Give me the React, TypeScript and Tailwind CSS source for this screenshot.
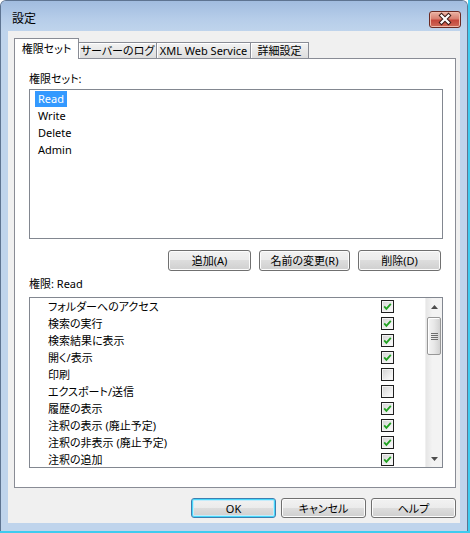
import React from 'react';

const permissionRows: { label: string; checked: boolean }[] = [
  { label: 'フォルダーへのアクセス', checked: true },
  { label: '検索の実行', checked: true },
  { label: '検索結果に表示', checked: true },
  { label: '開く/表示', checked: true },
  { label: '印刷', checked: false },
  { label: 'エクスポート/送信', checked: false },
  { label: '履歴の表示', checked: true },
  { label: '注釈の表示 (廃止予定)', checked: true },
  { label: '注釈の非表示 (廃止予定)', checked: true },
  { label: '注釈の追加', checked: true },
];

const permissionSets = ['Read', 'Write', 'Delete', 'Admin'];

const CheckBox: React.FC<{ checked: boolean }> = ({ checked }) => (
  <svg width="13" height="13" viewBox="0 0 13 13">
    <defs>
      <linearGradient id="cbFill" x1="0" y1="0" x2="1" y2="1">
        <stop offset="0" stopColor="#d6d6d6" />
        <stop offset="1" stopColor="#fbfbfb" />
      </linearGradient>
    </defs>
    <rect x="0.5" y="0.5" width="12" height="12" fill="#f4f4f4" stroke="#1f1f1f" />
    <rect x="2" y="2" width="9" height="9" fill="url(#cbFill)" />
    {checked && (
      <path d="M3.2 6.4 L5.4 8.8 L9.8 3.8" fill="none" stroke="#21a121" strokeWidth="1.8" />
    )}
  </svg>
);

const WinButton: React.FC<{ label: string; width: string; isDefault?: boolean }> = ({
  label,
  width,
  isDefault,
}) => (
  <button
    className={
      isDefault
        ? `${width} h-full rounded-[3px] border border-[#3c7fb1] bg-[linear-gradient(to_bottom,#f2f2f2_0%,#ebebeb_50%,#dddddd_50%,#cfcfcf_100%)] shadow-[inset_0_0_0_1px_#48d8fb,inset_0_0_0_2px_#c4ecfb] leading-none text-black`
        : `${width} h-full rounded-[3px] border border-[#707070] bg-[linear-gradient(to_bottom,#f2f2f2_0%,#ebebeb_50%,#dddddd_50%,#cfcfcf_100%)] shadow-[inset_0_0_0_1px_#fcfcfc] leading-none text-black`
    }
  >
    {label}
  </button>
);

const Tab: React.FC<{ label: string; width: string; active?: boolean }> = ({ label, width, active }) =>
  active ? (
    <div
      className={`${width} h-[21px] relative z-10 flex items-start justify-center pt-[2px] border border-b-0 border-[#898c95] bg-white whitespace-nowrap`}
    >
      {label}
    </div>
  ) : (
    <div
      className={`${width} h-[17px] -ml-px flex items-center justify-center border border-b-0 border-[#898c95] bg-[linear-gradient(to_bottom,#f3f3f3,#e6e6e6_55%,#dcdcdc)] shadow-[inset_1px_1px_0_#ffffff] whitespace-nowrap`}
    >
      {label}
    </div>
  );

const ScrollBar: React.FC = () => (
  <div className="w-[17px] h-full flex flex-col bg-[linear-gradient(to_right,#e6e6e6,#f3f3f3_40%,#f3f3f3)] border-l border-[#f0f0f0]">
    <div className="h-[17px] flex items-center justify-center">
      <svg width="7" height="4" viewBox="0 0 7 4">
        <path d="M3.5 0 L7 4 L0 4 Z" fill="#4d4d4d" />
      </svg>
    </div>
    <div className="mt-[2px] mx-[1px] h-[38px] rounded-[2px] border border-[#979797] bg-[linear-gradient(to_right,#f4f4f4,#e8e8e8_50%,#d2d2d2)] shadow-[inset_1px_1px_0_#ffffff] flex flex-col items-center justify-center gap-[1px]">
      <div className="w-[7px] h-px bg-[#6e6e6e]" />
      <div className="w-[7px] h-px bg-[#6e6e6e]" />
      <div className="w-[7px] h-px bg-[#6e6e6e]" />
      <div className="w-[7px] h-px bg-[#6e6e6e]" />
    </div>
    <div className="flex-1" />
    <div className="h-[17px] flex items-center justify-center">
      <svg width="7" height="4" viewBox="0 0 7 4">
        <path d="M0 0 L7 0 L3.5 4 Z" fill="#4d4d4d" />
      </svg>
    </div>
  </div>
);

export default function App() {
  return (
    <div className="w-[470px] h-[533px] bg-white border-r-[2px] border-b-[2px] border-[#3fcbef] [font-family:'Noto_Sans','Noto_Sans_CJK_JP',sans-serif] [font-feature-settings:'palt'] text-[11px] leading-[16px] text-black">
      <div className="w-full h-full flex flex-col rounded-t-[6px] border border-b-0 border-[#5e7491] bg-[#bfd4ec] overflow-hidden">
        {/* title bar */}
        <div className="h-[30px] flex items-start justify-between bg-[linear-gradient(to_bottom,#a1bcdf,#b6cde9_60%,#bfd4ec)]">
          <div className="pl-[11px] pt-[10px] text-[12px]">設定</div>
          <div className="mt-[10px] mr-[6px] w-[32px] h-[17px] rounded-[3px] border border-[#6b2a22] bg-[linear-gradient(to_bottom,#eab3a5,#d98070_45%,#c4463a_55%,#cf6a58)] shadow-[inset_0_0_0_1px_#f0b8a8] flex items-center justify-center">
            <svg width="30" height="15" viewBox="0 0 30 15">
              <path d="M11.5 3.5 L18.5 10.5 M18.5 3.5 L11.5 10.5" stroke="#3b1a16" strokeWidth="4.2" strokeLinecap="square" />
              <path d="M11.5 3.5 L18.5 10.5 M18.5 3.5 L11.5 10.5" stroke="#ffffff" strokeWidth="2.2" strokeLinecap="square" />
            </svg>
          </div>
        </div>

        {/* client area */}
        <div className="mx-[7px] h-[492px] bg-[#f0f0f0] flex flex-col">
          {/* tabs */}
          <div className="ml-[6px] mt-[7px] h-[21px] -mb-px flex items-end">
            <Tab label="権限セット" width="w-[65px]" active />
            <Tab label="サーバーのログ" width="w-[79px]" />
            <Tab label="XML Web Service" width="w-[95px]" />
            <Tab label="詳細設定" width="w-[59px]" />
          </div>

          {/* tab panel */}
          <div className="ml-[6px] w-[442px] h-[430px] border border-[#898c95] bg-white pl-[14px] pt-[12px] flex flex-col">
            <div className="h-[16px]">権限セット:</div>

            <div className="mt-[2px] w-[414px] h-[150px] border border-[#828790] bg-white pt-px pl-[5px]">
              {permissionSets.map((name, i) => (
                <div key={name} className="h-[17px] flex items-start">
                  <span
                    className={
                      i === 0
                        ? 'h-[16px] px-[3px] bg-[#3399ff] text-white'
                        : 'h-[16px] px-[3px]'
                    }
                  >
                    {name}
                  </span>
                </div>
              ))}
            </div>

            <div className="mt-[11px] w-[414px] h-[21px] pr-[2px] flex justify-end gap-[8px]">
              <WinButton label="追加(A)" width="w-[83px]" />
              <WinButton label="名前の変更(R)" width="w-[91px]" />
              <WinButton label="削除(D)" width="w-[83px]" />
            </div>

            <div className="mt-[5px] h-[16px]">権限: Read</div>

            <div className="mt-[5px] w-[414px] h-[171px] border border-[#828790] bg-white flex overflow-hidden">
              <div className="flex-1 flex flex-col">
                {permissionRows.map((row) => (
                  <div key={row.label} className="h-[17px] shrink-0 flex items-center pl-[18px]">
                    <div className="w-[333px] whitespace-nowrap">{row.label}</div>
                    <CheckBox checked={row.checked} />
                  </div>
                ))}
              </div>
              <ScrollBar />
            </div>
          </div>

          {/* dialog buttons */}
          <div className="mt-[10px] h-[20px] pr-[4px] flex justify-end gap-[5px]">
            <WinButton label="OK" width="w-[85px]" isDefault />
            <WinButton label="キャンセル" width="w-[85px]" />
            <WinButton label="ヘルプ" width="w-[85px]" />
          </div>
        </div>
      </div>
    </div>
  );
}
